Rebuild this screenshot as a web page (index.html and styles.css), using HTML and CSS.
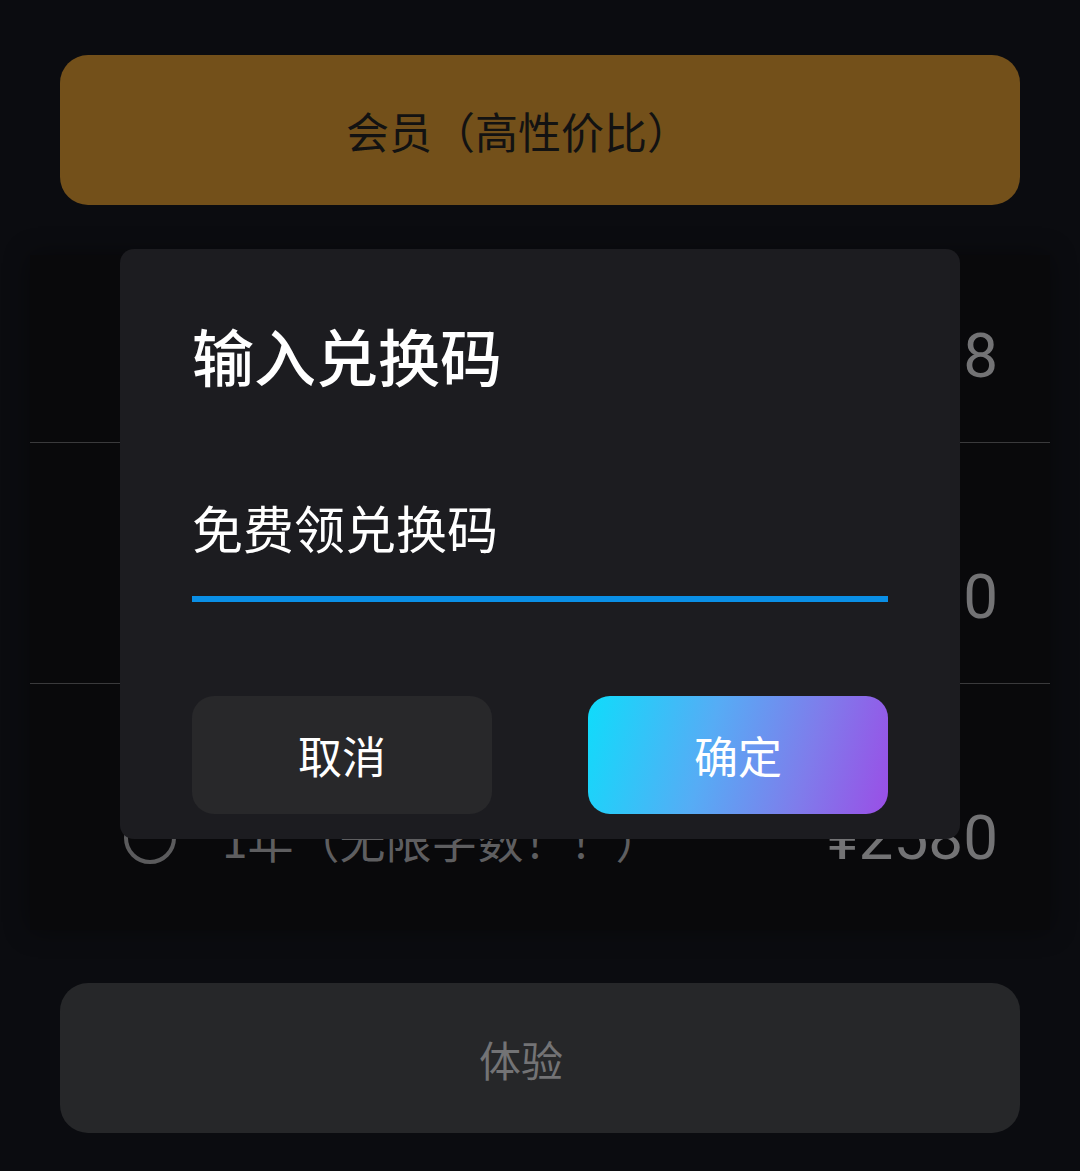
FILE: index.html
```html
<!DOCTYPE html>
<html lang="zh-CN">
<head>
  <meta charset="UTF-8" />
  <meta name="viewport" content="width=device-width, initial-scale=1.0" />
  <title>输入兑换码</title>
  <link rel="stylesheet" href="styles.css">
</head>
<body>
  <div class="page">
    <button class="member-btn">会员（高性价比）</button>

    <div class="plans">
      <div class="plan-row first">
        <span class="radio"></span>
        <span class="plan-name">1个月</span>
        <span class="plan-price">¥298</span>
      </div>
      <div class="plan-row">
        <span class="radio"></span>
        <span class="plan-name">3个月</span>
        <span class="plan-price">¥980</span>
      </div>
      <div class="plan-row">
        <span class="radio"></span>
        <span class="plan-name">1年（无限字数！！）</span>
        <span class="plan-price">¥2580</span>
      </div>
    </div>

    <button class="trial-btn">体验</button>
  </div>

  <!-- redeem code dialog -->
  <div class="overlay">
    <div class="dialog">
      <h2 class="dialog-title">输入兑换码</h2>
      <div class="code-input">免费领兑换码</div>
      <div class="dialog-actions">
        <button class="btn btn-cancel">取消</button>
        <button class="btn btn-ok">确定</button>
      </div>
    </div>
  </div>
</body>
</html>
```

FILE: styles.css
```css
body {
  margin: 0;
  background-color: #0b0c10;
  font-family: "Noto Sans CJK SC", "Noto Sans", sans-serif;
  color: #fff;
  min-height: 1171px;
  position: relative;
  overflow: hidden;
}
button {
  font-family: inherit;
  border: none;
  cursor: pointer;
}
.page {
  padding: 55px 60px 0;
}
.member-btn {
  display: block;
  width: 100%;
  height: 150px;
  border-radius: 28px;
  background-color: #73501a;
  color: #121212;
  font-size: 43px;
  padding: 0 44px 0 0;
}
.plans {
  margin: 50px -30px 0;
  height: 675px;
  background-color: #09090b;
  box-shadow: 0 0 24px rgba(0, 0, 0, 0.4);
}
.plan-row {
  display: flex;
  align-items: flex-start;
  gap: 46px;
  height: 241px;
  box-sizing: border-box;
  padding: 124px 52px 0 94px;
  border-bottom: 1px solid #3a3a3c;
}
.plan-row.first {
  height: 188px;
  padding-top: 71px;
}
.plan-row:last-child {
  border-bottom: none;
}
.radio {
  flex: none;
  width: 44px;
  height: 44px;
  margin-top: 4px;
  border: 4px solid #5b5b5d;
  border-radius: 50%;
}
.plan-name {
  flex: 1;
  font-size: 46px;
  line-height: 60px;
  color: #5e5e60;
}
.plan-price {
  font-family: "Roboto", "Liberation Sans", sans-serif;
  font-size: 62px;
  line-height: 60px;
  color: #737375;
}
.trial-btn {
  display: block;
  width: 100%;
  height: 150px;
  margin-top: 53px;
  border-radius: 28px;
  background-color: #262729;
  color: #737375;
  font-size: 42px;
  padding: 0 38px 0 0;
}
.overlay {
  position: absolute;
  top: 0;
  left: 0;
  right: 0;
  display: flex;
  justify-content: center;
  padding-top: 249px;
}
.dialog {
  width: 840px;
  box-sizing: border-box;
  padding: 69px 72px 25px 72px;
  background-color: #1c1c20;
  border-radius: 14px;
}
.dialog-title {
  margin: 0;
  font-size: 62px;
  line-height: 74px;
  font-weight: 500;
  color: #fff;
}
.code-input {
  margin-top: 105px;
  font-size: 51px;
  line-height: 60px;
  padding-bottom: 39px;
  border-bottom: 6px solid #0a8fe6;
  color: #fff;
}
.dialog-actions {
  display: flex;
  justify-content: space-between;
  margin-top: 94px;
}
.btn {
  width: 300px;
  height: 118px;
  border-radius: 22px;
  font-size: 44px;
  color: #fff;
}
.btn-cancel {
  background-color: #28282a;
}
.btn-ok {
  background: linear-gradient(105deg, #0fdcfb 0%, #56acf5 40%, #7f7ceb 72%, #9a4ee6 100%);
}
```
